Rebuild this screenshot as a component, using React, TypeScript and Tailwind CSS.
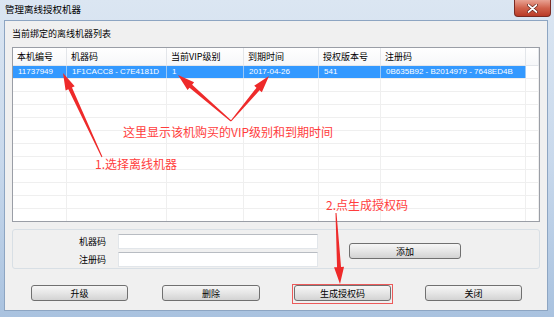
const cjk = "font-['Noto_Sans_CJK_SC','Noto_Sans_CJK_JP',sans-serif]"
const latin = "font-['Liberation_Sans','Noto_Sans_CJK_SC',sans-serif]"

const cols = [54, 100, 77, 75, 62, 145, 13]
const headers = ['本机编号', '机器码', '当前VIP级别', '到期时间', '授权版本号', '注册码', '']
const selected = ['11737949', '1F1CACC8 - C7E4181D', '1', '2017-04-26', '541', '0B635B92 - B2014979 - 7648ED4B']

function arrow(x1: number, y1: number, x2: number, y2: number, head = 17, hw = 5, sw = 2, tw = 0.5) {
  const dx = x2 - x1
  const dy = y2 - y1
  const len = Math.hypot(dx, dy)
  const ux = dx / len
  const uy = dy / len
  const nx = -uy
  const ny = ux
  const bx = x2 - ux * head
  const by = y2 - uy * head
  const pts = [
    [x1 + nx * tw, y1 + ny * tw],
    [bx + nx * sw, by + ny * sw],
    [bx + nx * hw, by + ny * hw],
    [x2, y2],
    [bx - nx * hw, by - ny * hw],
    [bx - nx * sw, by - ny * sw],
    [x1 - nx * tw, y1 - ny * tw],
  ]
  return pts.map((p) => p.join(',')).join(' ')
}

function Btn({ label, w }: { label: string; w: string }) {
  return (
    <div
      className={`${w} h-[16px] rounded-[3px] border border-[#707070] bg-gradient-to-b from-[#f6f6f6] via-[#e6e6e6] to-[#d3d3d3] flex items-center justify-center text-[9px] leading-none text-black ${cjk}`}
    >
      {label}
    </div>
  )
}

export default function App() {
  return (
    <div className="relative w-[554px] h-[317px] overflow-hidden flex flex-col bg-gradient-to-b from-[#dbe6f2] via-[#c9d9ec] to-[#a9c2df]">
      {/* Title bar */}
      <div className="h-[20px] flex items-start justify-between shrink-0">
        <span className={`ml-[5px] mt-[3px] text-[9.5px] leading-[13px] text-black ${cjk}`}>管理离线授权机器</span>
        <div className="mr-[3px] w-[37px] h-[17px] rounded-b-[4px] border border-[#7a2a22] border-t-0 bg-gradient-to-b from-[#e8a293] via-[#d0624c] to-[#b93a26] flex items-center justify-center">
          <svg width="11" height="9" viewBox="0 0 11 9">
            <path d="M1.5 1 L9.5 8 M9.5 1 L1.5 8" stroke="#5a1a12" strokeWidth="3" strokeLinecap="round" />
            <path d="M1.5 1 L9.5 8 M9.5 1 L1.5 8" stroke="#ffffff" strokeWidth="1.7" strokeLinecap="round" />
          </svg>
        </div>
      </div>

      {/* Client area */}
      <div className="flex-1 ml-[4px] mr-[6px] mb-[6px] bg-[#f0f0f0] border border-[#8da5c2] flex flex-col">
        <div className={`mt-[7px] ml-[7px] text-[9px] leading-[12px] text-black ${cjk}`}>当前绑定的离线机器列表</div>

        {/* List view */}
        <div className="mt-[7px] ml-[7px] w-[528px] h-[175px] border border-[#9a9ea6] bg-white overflow-hidden">
          <div className="flex h-[18px] border-b border-[#e3e6ea] bg-gradient-to-b from-white to-[#f6f7f9]">
            {headers.map((h, i) => (
              <div
                key={i}
                style={{ width: cols[i] }}
                className={`shrink-0 border-r border-[#e3e6ea] pl-[4px] flex items-center text-[9px] leading-none text-black ${cjk}`}
              >
                {h}
              </div>
            ))}
          </div>
          <div className="flex h-[13px] border-b border-[#eeeeee]">
            {cols.map((w, i) => (
              <div
                key={i}
                style={{ width: w }}
                className={`shrink-0 border-r flex items-center pl-[5px] text-[8px] leading-none ${latin} ${
                  i < 6 ? 'bg-[#3399ff] text-white border-[#9cc8f5]' : 'border-[#eeeeee]'
                }`}
              >
                {selected[i] ?? ''}
              </div>
            ))}
          </div>
          {Array.from({ length: 11 }).map((_, r) => (
            <div key={r} className="flex h-[13px] border-b border-[#efefef]">
              {cols.map((w, i) => (
                <div key={i} style={{ width: w }} className="shrink-0 border-r border-[#efefef]" />
              ))}
            </div>
          ))}
        </div>

        {/* Group box */}
        <div className="mt-[7px] ml-[7px] w-[528px] h-[40px] rounded-[3px] border border-[#d8dfe5] flex">
          <div className="w-[93px] flex flex-col items-end pt-[4px] gap-[3px]">
            <span className={`h-[15px] flex items-center text-[9px] leading-none text-black ${cjk}`}>机器码</span>
            <span className={`h-[15px] flex items-center text-[9px] leading-none text-black ${cjk}`}>注册码</span>
          </div>
          <div className="ml-[12px] flex flex-col pt-[4px] gap-[3px]">
            <div className="w-[200px] h-[15px] bg-white border border-[#e2e6ea] border-t-[#b8bcc2]" />
            <div className="w-[200px] h-[15px] bg-white border border-[#e2e6ea] border-t-[#b8bcc2]" />
          </div>
          <div className="ml-[31px] mt-[13px]">
            <Btn label="添加" w="w-[112px]" />
          </div>
        </div>

        {/* Bottom buttons */}
        <div className="mt-[16px] pl-[26px] flex gap-[34px]">
          <Btn label="升级" w="w-[97px]" />
          <Btn label="删除" w="w-[98px]" />
          <Btn label="生成授权码" w="w-[97px]" />
          <Btn label="关闭" w="w-[97px]" />
        </div>
      </div>

      {/* Annotations */}
      <svg className="absolute inset-0 pointer-events-none" width="554" height="317">
        <polygon points={arrow(102, 157, 63, 73)} fill="#ee2a2a" />
        <polygon points={arrow(231, 121, 178, 75)} fill="#ee2a2a" />
        <polygon points={arrow(231, 121, 269, 76)} fill="#ee2a2a" />
        <polygon points={arrow(336, 213, 340, 284)} fill="#ee2a2a" />
        <rect x="292.5" y="284.5" width="100" height="19" fill="none" stroke="#ec5a5a" strokeWidth="1" />
      </svg>
      <span className={`absolute left-[123px] top-[124px] text-[12px] leading-[16px] text-[#ff3d3d] ${cjk}`}>
        这里显示该机购买的VIP级别和到期时间
      </span>
      <span className={`absolute left-[95px] top-[156px] text-[12px] leading-[16px] text-[#ff3d3d] ${cjk}`}>
        1.选择离线机器
      </span>
      <span className={`absolute left-[326px] top-[197px] text-[12px] leading-[16px] text-[#ff3d3d] ${cjk}`}>
        2.点生成授权码
      </span>
    </div>
  )
}
